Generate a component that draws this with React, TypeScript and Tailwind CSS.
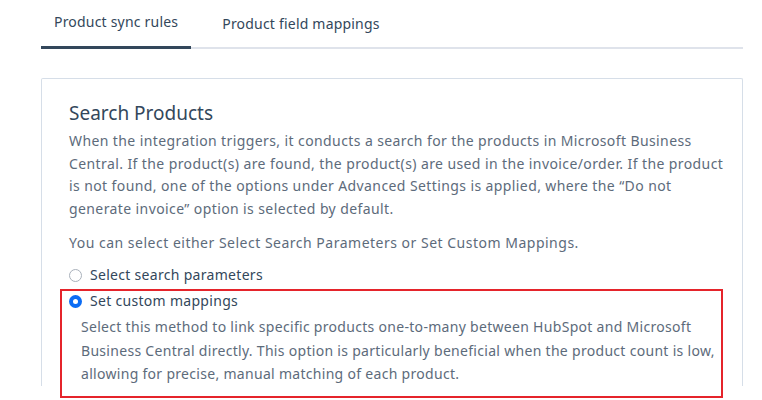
import { useState } from "react";

const tabs = ["Product sync rules", "Product field mappings"];

const RadioOption = ({
  label,
  checked,
  onSelect,
}: {
  label: string;
  checked: boolean;
  onSelect: () => void;
}) => (
  <label className="flex items-center gap-[8px] cursor-pointer" onClick={onSelect}>
    {checked ? (
      <span className="w-[13px] h-[13px] rounded-full bg-[#0b6cf4] flex items-center justify-center">
        <span className="w-[5px] h-[5px] rounded-full bg-white" />
      </span>
    ) : (
      <span className="w-[13px] h-[13px] rounded-full border border-[#a9b1bb] bg-white" />
    )}
    <span className="text-[14px] leading-[20px] tracking-[0.3px] text-[#33475b]">{label}</span>
  </label>
);

const App = () => {
  const [activeTab, setActiveTab] = useState(0);
  const [method, setMethod] = useState("custom");

  return (
    <div
      className="w-[762px] h-[400px] bg-white overflow-hidden pl-[41px] pr-[19px]"
      style={{ fontFamily: '"Noto Sans", Arial, sans-serif' }}
    >
      {/* Tabs */}
      <div className="flex border-b-[2px] border-[#dfe3eb] mt-[12px]">
        {tabs.map((tab, i) => (
          <button
            key={tab}
            onClick={() => setActiveTab(i)}
            className={`${
              i === activeTab
                ? "px-[13px] pb-[14px] border-b-[3px] border-[#33475b] -mb-[2px]"
                : "ml-[18px] px-[13px] pt-[2px] pb-[13px]"
            } text-[14px] leading-[20px] tracking-[0.2px] text-[#33475b]`}
          >
            {tab}
          </button>
        ))}
      </div>

      {/* Card */}
      <div className="mt-[29px] h-[308px] border-t border-x border-[#d6dee8] rounded-t-[2px] pl-[27px] pr-[12px] pt-[20px]">
        <h2 className="text-[19px] leading-[28px] text-[#33475b]">Search Products</h2>
        <p className="mt-[3px] text-[14px] leading-[22.7px] tracking-[0.4px] text-[#5d6b7b]">
          When the integration triggers, it conducts a search for the products in Microsoft Business
          Central. If the product(s) are found, the product(s) are used in the invoice/order. If the product
          is not found, one of the options under Advanced Settings is applied, where the “Do not
          generate invoice” option is selected by default.
        </p>
        <p className="mt-[11px] text-[14px] leading-[22.5px] tracking-[0.5px] text-[#5d6b7b]">
          You can select either Select Search Parameters or Set Custom Mappings.
        </p>

        <div className="mt-[11px]">
          <RadioOption
            label="Select search parameters"
            checked={method === "search"}
            onSelect={() => setMethod("search")}
          />
          <div className="-ml-[9px] mt-[4px] w-[663px] border-[2px] border-[#e5242b] pl-[7px] pb-[10px]">
            <RadioOption
              label="Set custom mappings"
              checked={method === "custom"}
              onSelect={() => setMethod("custom")}
            />
            <p className="mt-[4px] pl-[12px] text-[14px] leading-[23.5px] tracking-[0.3px] text-[#5d6b7b]">
              Select this method to link specific products one-to-many between HubSpot and Microsoft
              Business Central directly. This option is particularly beneficial when the product count is low,
              allowing for precise, manual matching of each product.
            </p>
          </div>
        </div>
      </div>
    </div>
  );
};

export default App;
